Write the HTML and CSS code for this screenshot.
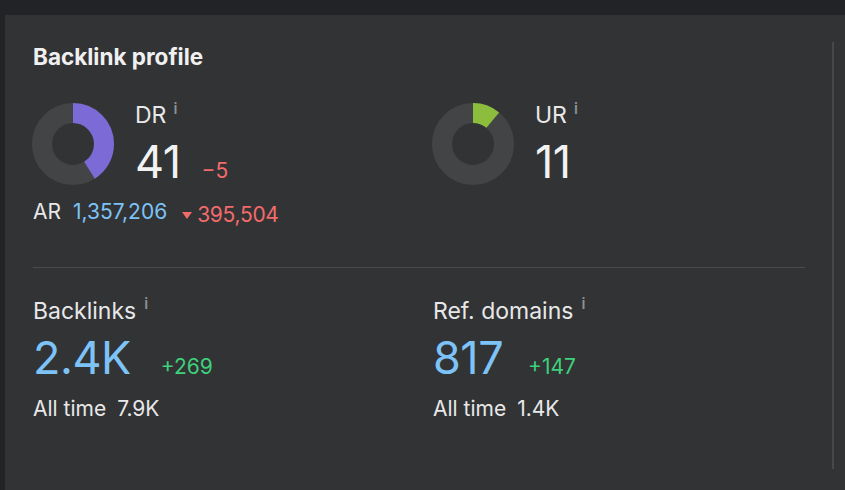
FILE: index.html
```html
<!DOCTYPE html>
<html lang="en">
<head>
<meta charset="utf-8">
<title>Backlink profile</title>
<link rel="stylesheet" href="styles.css">
</head>
<body>
<div class="topbar"></div>
<div class="panel">
  <div class="main">
    <h2 class="title">Backlink profile</h2>
    <div class="grid ratings">
      <div class="col">
        <div class="rating">
          <svg class="donut" width="82" height="82" viewBox="0 0 82 82">
            <circle cx="41" cy="41" r="31" fill="none" stroke="#434446" stroke-width="20"/>
            <circle cx="41" cy="41" r="31" fill="none" stroke="#7c6bd6" stroke-width="20" stroke-dasharray="79.86 194.78" transform="rotate(-90 41 41)"/>
          </svg>
          <div class="rating-info">
            <div class="label">DR<span class="info">i</span></div>
            <div class="value-row"><span class="big">41</span><span class="delta neg gap-dr">−5</span></div>
          </div>
        </div>
        <div class="ar">AR<span class="blue ar-val">1,357,206</span><span class="neg arrow-val"><svg class="tri" width="10" height="7" viewBox="0 0 10 7"><path d="M0 0H10L5 7Z" fill="#f26b6b"/></svg>395,504</span></div>
      </div>
      <div class="col">
        <div class="rating">
          <svg class="donut" width="82" height="82" viewBox="0 0 82 82">
            <circle cx="41" cy="41" r="31" fill="none" stroke="#434446" stroke-width="20"/>
            <circle cx="41" cy="41" r="31" fill="none" stroke="#8cbd3d" stroke-width="20" stroke-dasharray="21.43 194.78" transform="rotate(-90 41 41)"/>
          </svg>
          <div class="rating-info">
            <div class="label">UR<span class="info">i</span></div>
            <div class="value-row"><span class="big">11</span></div>
          </div>
        </div>
      </div>
    </div>
    <div class="divider"></div>
    <div class="grid stats">
      <div class="col">
        <div class="label">Backlinks<span class="info">i</span></div>
        <div class="value-row"><span class="big blue">2.4K</span><span class="delta pos gap-bl">+269</span></div>
        <div class="alltime">All time<span class="at-val">7.9K</span></div>
      </div>
      <div class="col">
        <div class="label">Ref. domains<span class="info">i</span></div>
        <div class="value-row"><span class="big blue">817</span><span class="delta pos gap-rd">+147</span></div>
        <div class="alltime">All time<span class="at-val">1.4K</span></div>
      </div>
    </div>
  </div>
  <div class="track"></div>
</div>
</body>
</html>
```
FILE: styles.css
```css
* { box-sizing: border-box; }
html, body { margin: 0; padding: 0; }
body {
  background: #222326;
  font-family: Inter, "Noto Sans", sans-serif;
  color: #ececed;
  width: 845px;
  height: 490px;
  overflow: hidden;
}
.topbar { height: 15px; background: #222326; }
.panel {
  margin-left: 5px;
  height: 475px;
  background: #323335;
  display: flex;
  padding: 27px 11px 21px 28px;
}
.main { flex: 1; }
.track { width: 2px; margin-left: 27px; background: #47484b; }
.title {
  margin: 1px 0 0;
  font-size: 22.5px;
  line-height: 28px;
  font-weight: 700;
  color: #f0f0f1;
}
.grid {
  display: grid;
  grid-template-columns: 372px 372px;
  column-gap: 28px;
}
.ratings { margin-top: 32px; }
.rating { display: flex; align-items: flex-start; }
.donut { display: block; margin-left: -1px; }
.rating-info { margin-left: 21px; }
.rating-info .label { margin-top: -1px; }
.label {
  font-size: 23px;
  line-height: 26px;
  color: #e8e8e9;
  display: flex;
  align-items: flex-start;
}
.info {
  font-size: 15px;
  line-height: 15px;
  font-weight: 600;
  color: #8e8f92;
  margin-left: 7px;
  margin-top: -1px;
}
.stats .info { margin-top: -2px; margin-left: 8px; }
.value-row { display: flex; align-items: baseline; margin-top: 8px; }
.big {
  font-size: 45px;
  line-height: 52px;
  font-weight: 400;
  color: #f2f2f2;
  letter-spacing: -0.5px;
}
.delta { font-size: 21px; }
.gap-dr { margin-left: 21px; }
.gap-bl { margin-left: 30px; }
.gap-rd { margin-left: 25px; }
.neg { color: #f26b6b; }
.pos { color: #3fd07c; }
.blue { color: #7dc3f7; }
.big.blue { color: #7dc3f7; }
.ar {
  margin-top: 11px;
  font-size: 21px;
  line-height: 26px;
  color: #e8e8e9;
  display: flex;
  align-items: baseline;
}
.ar-val { margin-left: 12px; }
.arrow-val { margin-left: 15px; display: flex; align-items: center; letter-spacing: -0.3px; }
.tri { margin-right: 5px; margin-top: 1px; }
.divider { height: 1px; background: #4a4b4e; margin-top: 39px; }
.stats { margin-top: 30px; }
.alltime {
  margin-top: 12px;
  font-size: 21px;
  line-height: 26px;
  color: #e8e8e9;
}
.at-val { margin-left: 11px; }
```
